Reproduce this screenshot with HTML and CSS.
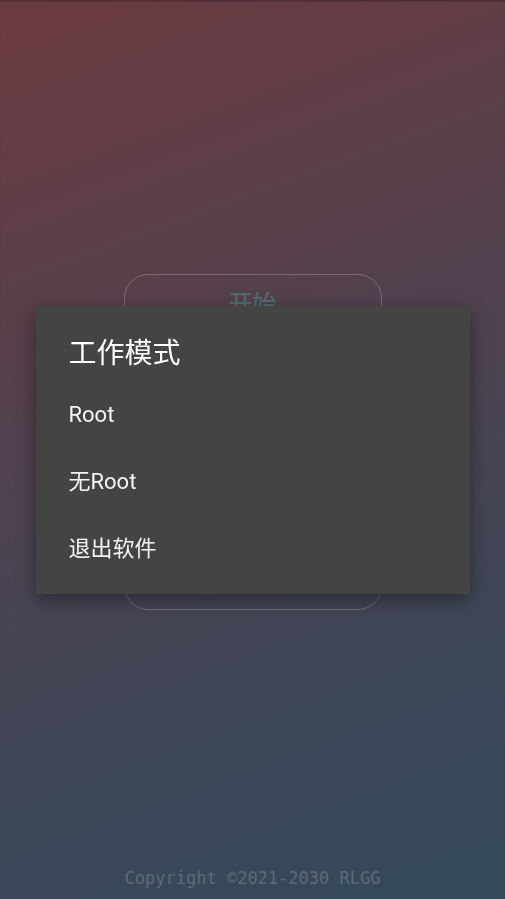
FILE: index.html
```html
<!DOCTYPE html>
<html lang="zh">
<head>
<meta charset="utf-8">
<title>工作模式</title>
<link rel="stylesheet" href="styles.css">
</head>
<body>
<div class="screen">
  <main class="menu">
    <button class="btn btn-start">开始</button>
    <button class="btn">设置</button>
    <button class="btn">关于</button>
    <button class="btn btn-exit">退出</button>
  </main>
  <footer class="copyright">Copyright ©2021-2030 RLGG</footer>
</div>
<div class="scrim">
  <div class="dialog">
    <div class="dialog-title">工作模式</div>
    <ul class="dialog-list">
      <li class="dialog-item">Root</li>
      <li class="dialog-item">无Root</li>
      <li class="dialog-item">退出软件</li>
    </ul>
  </div>
</div>
</body>
</html>
```
FILE: styles.css
```css
html, body {
  margin: 0;
  padding: 0;
  height: 100%;
}
body {
  font-family: "Roboto", "Noto Sans CJK SC", sans-serif;
  background: linear-gradient(160deg, #6c3a3f 0%, #55404c 35%, #404656 70%, #33495c 100%);
  overflow: hidden;
}
.screen {
  height: 899px;
  display: flex;
  flex-direction: column;
  box-shadow: inset 0 3px 3px -2px rgba(0, 0, 0, 0.35);
}
.menu {
  flex: 1;
  display: flex;
  flex-direction: column;
  align-items: center;
  gap: 32px;
  padding-top: 274px;
}
.btn {
  width: 258px;
  height: 60px;
  border: 1px solid rgba(255, 255, 255, 0.22);
  border-radius: 24px;
  background: transparent;
  font-family: "Noto Sans CJK SC", sans-serif;
  font-size: 24px;
  color: #8a8f95;
  padding: 0 0 6px;
}
.btn-start {
  color: #4f7272;
}
.btn-exit {
  color: #6f6f7a;
}
.copyright {
  font-family: "DejaVu Sans Mono", monospace;
  font-size: 17px;
  line-height: 20px;
  color: #5f6a74;
  text-align: center;
  padding-bottom: 11px;
}
.scrim {
  position: fixed;
  inset: 0;
  display: flex;
  align-items: center;
  justify-content: center;
}
.dialog {
  width: 434px;
  height: 288px;
  box-sizing: border-box;
  background: #444444;
  box-shadow: 0 6px 18px rgba(0, 0, 0, 0.4);
  padding: 27px 0 11px;
  color: #ffffff;
}
.dialog-title {
  font-family: "Noto Sans CJK SC", sans-serif;
  font-size: 28px;
  line-height: 36px;
  padding-left: 33px;
  margin-bottom: 13px;
}
.dialog-list {
  list-style: none;
  margin: 0;
  padding: 0;
}
.dialog-item {
  height: 67px;
  line-height: 66px;
  font-size: 22px;
  padding-left: 33px;
  color: #f4f4f4;
}
```
